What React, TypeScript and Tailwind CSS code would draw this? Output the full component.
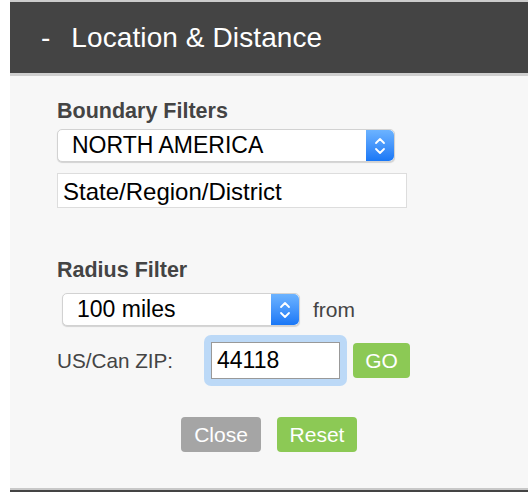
import React from 'react';

function Stepper() {
  return (
    <div className="w-[28px] h-full rounded-r-[5px] bg-gradient-to-b from-[#6cb3ff] to-[#1877f6] flex items-center justify-center">
      <svg width="14" height="22" viewBox="0 0 14 22" fill="none" stroke="white" strokeWidth="1.8" strokeLinecap="round" strokeLinejoin="round">
        <path d="M3 8 7 4l4 4" />
        <path d="M3 14l4 4 4-4" />
      </svg>
    </div>
  );
}

function Select({ value, width }: { value: string; width: string }) {
  return (
    <div className={`${width} h-[33px] flex bg-white rounded-[5px] border border-[#d2d2d2] shadow-[0_1px_1px_rgba(0,0,0,0.15)]`}>
      <div className="flex-1 flex items-center pl-[14px] text-[23px] text-black leading-none">{value}</div>
      <Stepper />
    </div>
  );
}

export default function App() {
  return (
    <div className="w-[528px] h-[492px] bg-white pl-[10px] font-['Liberation_Sans',Arial,sans-serif] overflow-hidden">
      <div className="h-full flex flex-col">
        <div className="h-[2px] bg-[#cccccc]" />
        <div className="h-[71px] bg-[#444444] flex items-center text-white text-[28px]">
          <span className="ml-[31px]">-</span>
          <span className="ml-[21px] tracking-[0.1px]">Location &amp; Distance</span>
        </div>
        <div className="h-[3px] bg-[#cfcfcf]" />

        <div className="flex-1 bg-[#f7f7f7] pl-[47px] pt-[23px]">
          {/* Boundary */}
          <h3 className="text-[21.5px] leading-[24px] font-bold text-[#444444]">Boundary Filters</h3>
          <div className="mt-[6px]">
            <Select value="NORTH AMERICA" width="w-[338px]" />
          </div>
          <div className="mt-[11px] w-[350px] h-[35px] bg-white border border-[#dddddd] flex items-center pl-[5px] pt-[3px] text-[24px] leading-none text-black">
            State/Region/District
          </div>

          {/* Radius */}
          <h3 className="mt-[50px] text-[21.5px] leading-[24px] font-bold text-[#444444]">Radius Filter</h3>
          <div className="mt-[11px] flex items-center pl-[5px]">
            <Select value="100 miles" width="w-[238px]" />
            <span className="ml-[13px] text-[21px] text-[#444444]">from</span>
          </div>

          <div className="mt-[9px] flex items-center">
            <span className="w-[147px] text-[20.7px] text-[#444444]">US/Can ZIP:</span>
            <div className="w-[143px] h-[51px] rounded-[7px] bg-[#bcd9f7] p-[7px]">
              <div className="w-full h-full bg-white border border-[#999999] flex items-center pl-[5px] text-[23px] text-black">
                44118
              </div>
            </div>
            <button className="ml-[6px] w-[57px] h-[35px] rounded-[4px] bg-[#8cc955] text-white text-[21px]">GO</button>
          </div>

          <div className="mt-[31px] flex justify-center gap-[16px] -ml-[47px]">
            <button className="w-[80px] h-[35px] rounded-[4px] bg-[#a5a5a5] text-white text-[21px]">Close</button>
            <button className="w-[80px] h-[35px] rounded-[4px] bg-[#8cc955] text-white text-[21px]">Reset</button>
          </div>
        </div>

        <div className="h-[2px] bg-[#c8c8c8]" />
        <div className="h-[2px] bg-[#444444]" />
      </div>
    </div>
  );
}
